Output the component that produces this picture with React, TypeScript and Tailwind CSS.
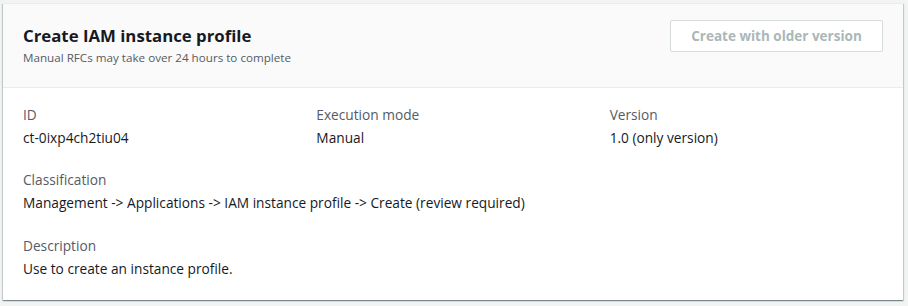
import React from "react";

export default function App() {
  const font = { fontFamily: "'Open Sans', Arial, sans-serif" };
  return (
    <div className="w-[908px] h-[306px] bg-[#f2f3f3] pt-[3px] pl-[3px]" style={font}>
      <div className="w-[900px] h-[297px] bg-white shadow-[0_1px_1px_0_rgba(0,28,36,0.3),1px_1px_1px_0_rgba(0,28,36,0.15),-1px_1px_1px_0_rgba(0,28,36,0.15)] border-t border-[#eaeded]">
        <div className="h-[84px] bg-[#fafafa] border-b border-[#eaeded] flex justify-between px-[20px]">
          <div className="pt-[21px]">
            <h2 className="text-[16.8px] leading-[22px] font-bold text-[#16191f]">Create IAM instance profile</h2>
            <p className="text-[11.65px] leading-[16px] text-[#545b64] mt-[3px]">Manual RFCs may take over 24 hours to complete</p>
          </div>
          <div className="pt-[16px]">
            <button className="w-[213px] h-[32px] border border-[#d5dbdb] rounded-[2px] bg-white text-[13.5px] font-bold text-[#aab7b8]">
              Create with older version
            </button>
          </div>
        </div>
        <div className="px-[20px] pt-[17px]">
          <div className="grid grid-cols-3 gap-x-[20px]">
            <Field label="ID" value="ct-0ixp4ch2tiu04" />
            <Field label="Execution mode" value="Manual" />
            <Field label="Version" value="1.0 (only version)" />
          </div>
          <div className="mt-[22px]">
            <Field label="Classification" value="Management -> Applications -> IAM instance profile -> Create (review required)" />
          </div>
          <div className="mt-[23px]">
            <Field label="Description" value="Use to create an instance profile." />
          </div>
        </div>
      </div>
    </div>
  );
}

function Field({ label, value }: { label: string; value: string }) {
  return (
    <div>
      <div className="text-[13.7px] leading-[20px] text-[#545b64]">{label}</div>
      <div className="text-[13.7px] leading-[20px] text-[#16191f] mt-[3px]">{value}</div>
    </div>
  );
}
